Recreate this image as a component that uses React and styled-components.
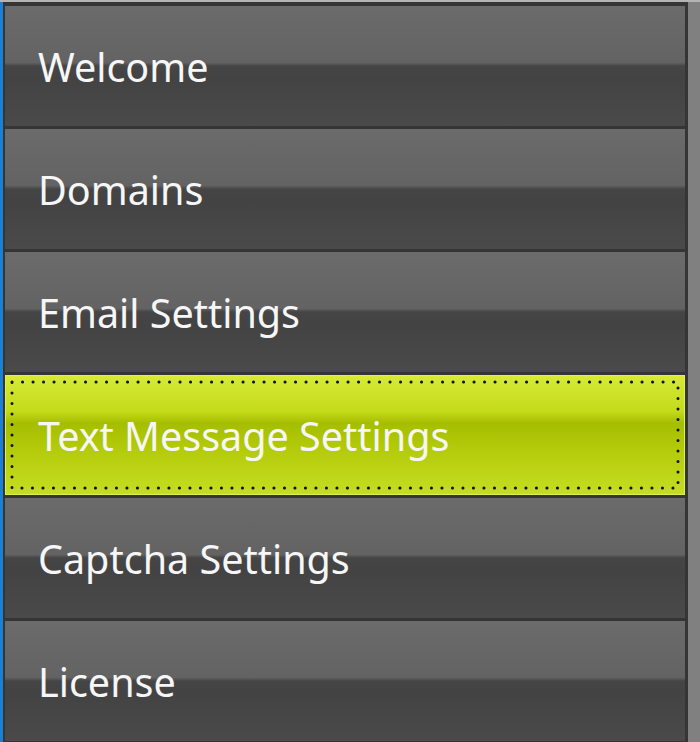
import React from 'react';
import styled, { createGlobalStyle, css } from 'styled-components';

const GlobalStyle = createGlobalStyle`
  html, body {
    margin: 0;
    padding: 0;
    background: #7f7f7f;
  }
`;

const Frame = styled.div`
  width: 700px;
  height: 742px;
  overflow: hidden;
  display: flex;
  background: #808080;
  border-top: 2px solid #b4b4b4;
  box-sizing: border-box;
  font-family: 'Noto Sans', 'Open Sans', sans-serif;
`;

const Accent = styled.div`
  width: 3px;
  flex: none;
  background: #1c7fd6;
`;

const Menu = styled.div`
  width: 685px;
  flex: none;
  display: flex;
  flex-direction: column;
  gap: 3px;
  padding: 4px 3px 0 2px;
  box-sizing: border-box;
  background: #353535;
`;

const Item = styled.div`
  position: relative;
  height: 120px;
  flex: none;
  display: flex;
  align-items: center;
  padding-left: 33px;
  padding-top: 2px;
  box-sizing: border-box;
  color: #f6f6f6;
  font-size: 39.5px;
  background: linear-gradient(
    to bottom,
    #6b6b6b 0%,
    #636363 47%,
    #454545 50%,
    #434343 60%,
    #4a4a4a 100%
  );

  ${(p) =>
    p.$active &&
    css`
      border: 1px solid #e0f050;
      padding-left: 32px;
      background: linear-gradient(
        to bottom,
        #d6ea36 0%,
        #c4db1a 30%,
        #a5be00 40%,
        #b2ca08 60%,
        #c6de22 100%
      );
    `}
`;

const Focus = styled.svg`
  position: absolute;
  left: 5px;
  top: 5px;
  width: calc(100% - 10px);
  height: calc(100% - 10px);
  overflow: visible;
  pointer-events: none;
`;

const items = [
  'Welcome',
  'Domains',
  'Email Settings',
  'Text Message Settings',
  'Captcha Settings',
  'License',
];

export default function App() {
  return (
    <>
      <GlobalStyle />
      <Frame>
        <Accent />
        <Menu>
          {items.map((label) => {
            const active = label === 'Text Message Settings';
            return (
              <Item key={label} $active={active}>
                {label}
                {active && (
                  <Focus preserveAspectRatio="none">
                    <rect
                      x="1"
                      y="1"
                      width="calc(100% - 2px)"
                      height="calc(100% - 2px)"
                      fill="none"
                      stroke="#111"
                      strokeWidth="3"
                      strokeDasharray="0.1 10.4"
                      strokeLinecap="round"
                    />
                  </Focus>
                )}
              </Item>
            );
          })}
        </Menu>
      </Frame>
    </>
  );
}
